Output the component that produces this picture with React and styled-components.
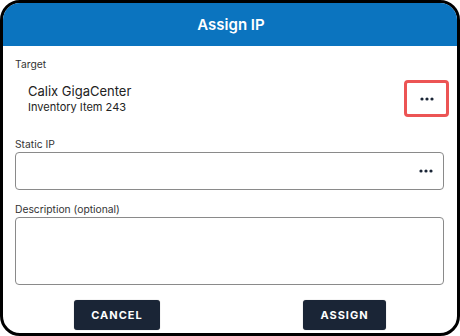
import React from "react"
import styled, { createGlobalStyle } from "styled-components"

const GlobalStyle = createGlobalStyle`
  html, body {
    margin: 0;
    padding: 0;
    background: #ffffff;
  }
  body {
    font-family: Inter, "Liberation Sans", sans-serif;
  }
`

const Frame = styled.div`
  box-sizing: border-box;
  width: 460px;
  height: 336px;
  border: 3px solid #000;
  border-radius: 20px;
  overflow: hidden;
  background: #fff;
  display: flex;
  flex-direction: column;
`

const Header = styled.div`
  height: 43px;
  flex-shrink: 0;
  background: #0b74bf;
  color: #fff;
  display: flex;
  align-items: center;
  justify-content: center;
  font-size: 15px;
  font-weight: 600;
  padding-left: 2px;
`

const Body = styled.div`
  padding: 12px 13px 0 12px;
  display: flex;
  flex-direction: column;
`

const Label = styled.div`
  font-size: 10.3px;
  color: #333;
  line-height: 13px;
`

const TargetRow = styled.div`
  display: flex;
  align-items: center;
  justify-content: space-between;
  margin-top: 9px;
  padding-left: 13px;
  margin-right: -5px;
`

const TargetText = styled.div`
  display: flex;
  flex-direction: column;
`

const TargetName = styled.div`
  font-size: 13px;
  color: #222;
  line-height: 17px;
`

const TargetSub = styled.div`
  font-size: 11px;
  color: #222;
  line-height: 15px;
`

const MoreButton = styled.button`
  box-sizing: border-box;
  width: 45px;
  height: 37px;
  border: 3px solid #ec5454;
  border-radius: 4px;
  background: #fff;
  display: flex;
  align-items: center;
  justify-content: center;
  padding: 0;
`

const Field = styled.div`
  display: flex;
  flex-direction: column;
  margin-top: ${(p) => p.$top}px;
`

const InputBox = styled.div`
  box-sizing: border-box;
  height: ${(p) => p.$h}px;
  border: 1px solid #8a8a8a;
  border-radius: 4px;
  margin-top: 1px;
  display: flex;
  align-items: center;
  justify-content: flex-end;
  padding-right: 10px;
`

const Footer = styled.div`
  display: flex;
  justify-content: space-between;
  padding: 15px 71px 0 71px;
`

const ActionButton = styled.button`
  box-sizing: border-box;
  width: ${(p) => p.$w}px;
  height: 30px;
  background: #1a2536;
  color: #fff;
  border: none;
  border-radius: 3px;
  font-family: Inter, "Liberation Sans", sans-serif;
  font-size: 11px;
  font-weight: 700;
  letter-spacing: 1px;
  box-shadow: 0 0 1px rgba(0, 0, 0, 0.4);
`

const Dots = () => (
  <svg width="14" height="4" viewBox="0 0 14 4">
    <circle cx="2" cy="2" r="1.6" fill="#1a2536" />
    <circle cx="7" cy="2" r="1.6" fill="#1a2536" />
    <circle cx="12" cy="2" r="1.6" fill="#1a2536" />
  </svg>
)

const App = () => (
  <>
    <GlobalStyle />
    <Frame>
      <Header>Assign IP</Header>
      <Body>
        <Label>Target</Label>
        <TargetRow>
          <TargetText>
            <TargetName>Calix GigaCenter</TargetName>
            <TargetSub>Inventory Item 243</TargetSub>
          </TargetText>
          <MoreButton>
            <Dots />
          </MoreButton>
        </TargetRow>
        <Field $top={21}>
          <Label>Static IP</Label>
          <InputBox $h={38}>
            <Dots />
          </InputBox>
        </Field>
        <Field $top={13}>
          <Label>Description (optional)</Label>
          <InputBox $h={68} />
        </Field>
      </Body>
      <Footer>
        <ActionButton $w={86}>CANCEL</ActionButton>
        <ActionButton $w={83}>ASSIGN</ActionButton>
      </Footer>
    </Frame>
  </>
)

export default App
